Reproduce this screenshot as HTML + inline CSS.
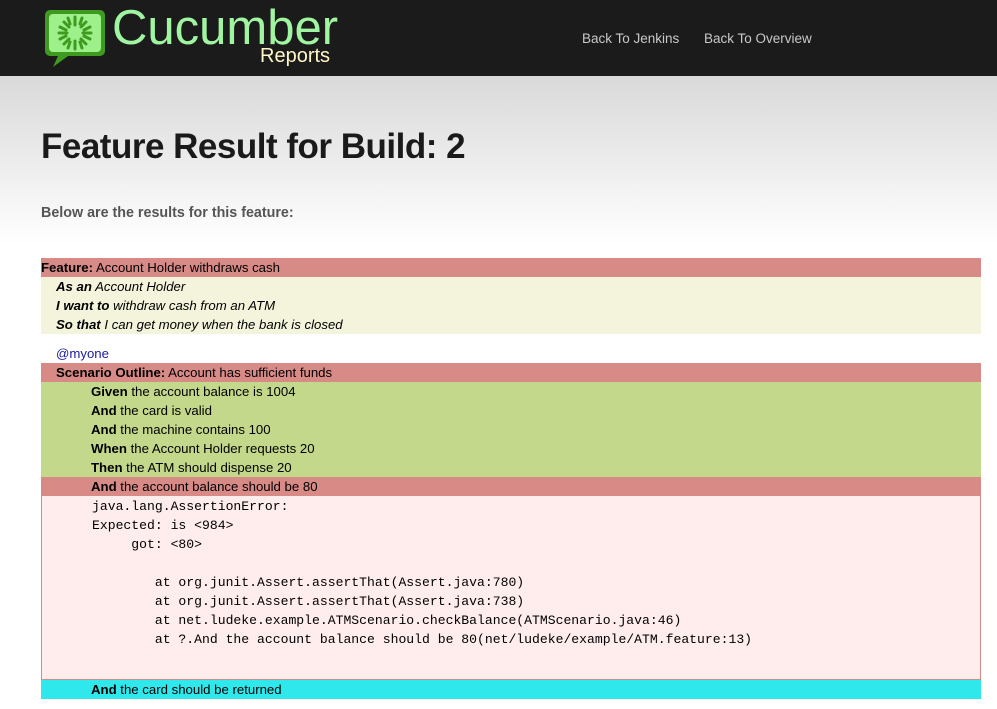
<!DOCTYPE html>
<html><head><meta charset="utf-8"><style>
*{margin:0;padding:0;box-sizing:border-box}
body{width:997px;height:709px;overflow:hidden;font-family:"Liberation Sans",Arial,sans-serif;font-size:13.2px;color:#000;background:linear-gradient(#d9d9d9 76px,#fff 245px)}
#hd{height:76px;background:#1b1b1b;position:relative}
#hd .c{position:absolute;left:112px;top:0px;font-size:49px;color:#a0f5a0}
#hd .r{position:absolute;left:260px;top:45px;font-size:20px;color:#fff6c8}
#hd .n{position:absolute;top:31px;font-size:13.5px;color:#c8c8c8}
h1{position:absolute;left:41px;top:127px;font-size:35px;font-weight:bold;color:#1a1a1a;letter-spacing:-0.5px}
.sub{position:absolute;left:41px;top:205px;font-size:14.3px;font-weight:bold;color:#555}
.w{position:absolute;left:41px;top:258px;width:940px}
.row{height:19px;line-height:19px;white-space:nowrap}
.red{background:#d88a87}.yel{background:#f4f4dc}.grn{background:#c4d88b}.cy{background:#2ee8ec}
.i1{padding-left:15px}.i2{padding-left:50px}
pre{font-family:"Liberation Mono",monospace;font-size:13.1px;line-height:19px;background:#ffecec;border:1px solid #d88a87;border-top:none;padding:1px 0 0 50px;height:184px}
</style></head><body>
<div id="hd">
<svg style="position:absolute;left:44px;top:8px" width="62" height="60" viewBox="0 0 62 60">
<path d="M6 2h50a5 5 0 0 1 5 5v36a5 5 0 0 1-5 5H24L9 59l5-11H6a5 5 0 0 1-5-5V7a5 5 0 0 1 5-5z" fill="#3f9b1f"/>
<rect x="5" y="6" width="52" height="38" rx="4" fill="#9df08a"/>
<g stroke="#3f9b1f" stroke-width="3" stroke-linecap="round">
<path d="M31 9v8M31 33v8M15 25h8M39 25h8M20 14l5 5M37 31l5 5M42 14l-5 5M25 31l-5 5M24 10l2 6M36 34l2 6M38 10l-2 6M26 34l-2 6M16 19l6 3M40 28l6 3M46 19l-6 3M22 28l-6 3"/></g>
</svg>
<div class="c">Cucumber</div><div class="r">Reports</div>
<div class="n" style="left:582px">Back To Jenkins</div>
<div class="n" style="left:704px">Back To Overview</div>
</div>
<h1>Feature Result for Build: 2</h1>
<div class="sub">Below are the results for this feature:</div>
<div class="w">
<div class="row red"><b>Feature:</b> Account Holder withdraws cash</div>
<div class="yel">
<div class="row i1"><i><b>As an</b> Account Holder</i></div>
<div class="row i1"><i><b>I want to</b> withdraw cash from an ATM</i></div>
<div class="row i1"><i><b>So that</b> I can get money when the bank is closed</i></div>
</div>
<div style="height:10px"></div>
<div class="row i1" style="color:#1a1aa0">@myone</div>
<div class="row red i1"><b>Scenario Outline:</b> Account has sufficient funds</div>
<div class="grn">
<div class="row i2"><b>Given</b> the account balance is 1004</div>
<div class="row i2"><b>And</b> the card is valid</div>
<div class="row i2"><b>And</b> the machine contains 100</div>
<div class="row i2"><b>When</b> the Account Holder requests 20</div>
<div class="row i2"><b>Then</b> the ATM should dispense 20</div>
</div>
<div class="row red i2"><b>And</b> the account balance should be 80</div>
<pre>java.lang.AssertionError:
Expected: is &lt;984&gt;
     got: &lt;80&gt;

        at org.junit.Assert.assertThat(Assert.java:780)
        at org.junit.Assert.assertThat(Assert.java:738)
        at net.ludeke.example.ATMScenario.checkBalance(ATMScenario.java:46)
        at ?.And the account balance should be 80(net/ludeke/example/ATM.feature:13)
</pre>
<div class="row cy i2"><b>And</b> the card should be returned</div>
</div>
</body></html>
